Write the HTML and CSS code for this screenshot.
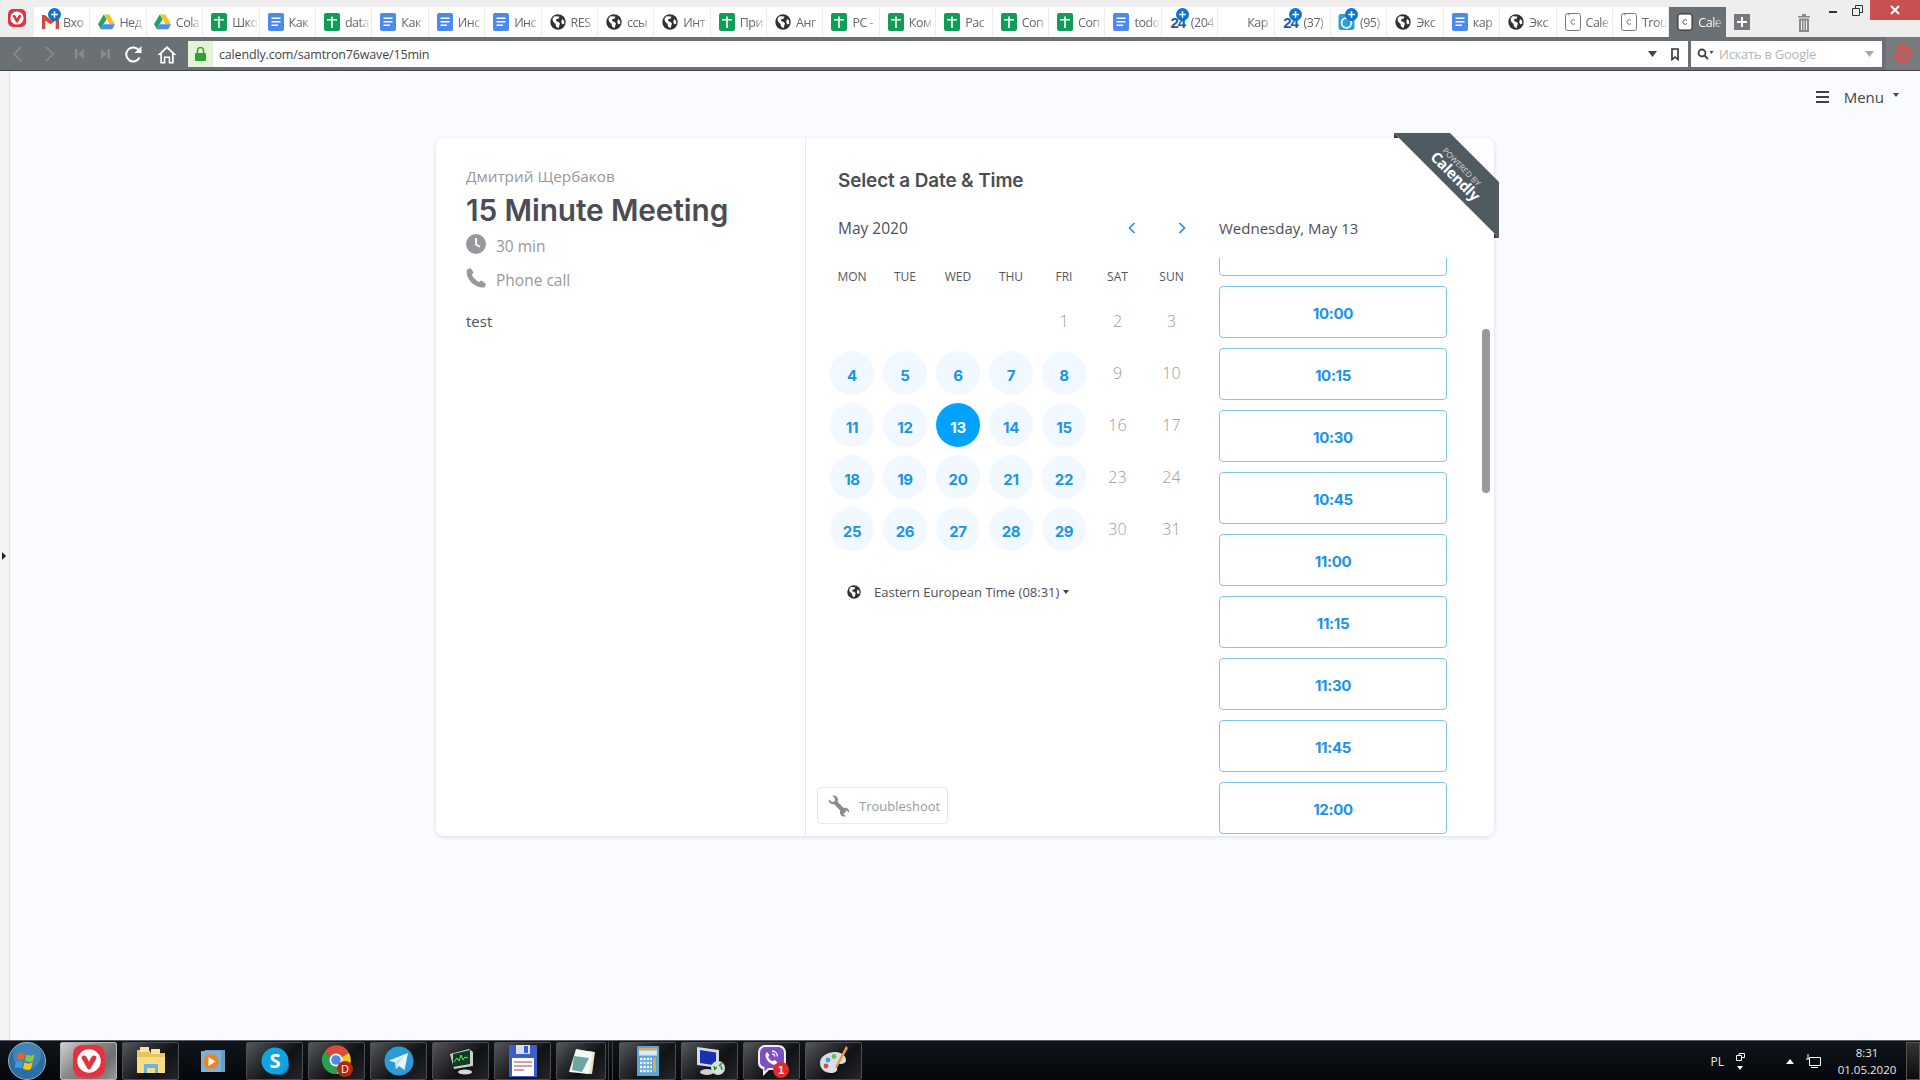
FILE: index.html
```html
<!DOCTYPE html>
<html lang="en">
<head>
<meta charset="utf-8">
<title>Calendly</title>
<link rel="stylesheet" href="styles.css">
</head>
<body>
<svg class="defs" width="0" height="0">
  <symbol id="viv" viewBox="0 0 18 18"><rect width="18" height="18" rx="5" fill="#e5323f"/><circle cx="9" cy="9" r="6.6" fill="#fff"/><path d="M5.2 6.3c1-.8 2-.3 2.4.5L9 9.4l1.4-2.7c.4-.8 1.500-1.200 2.300-.5.700.600.500 1.300.200 1.900l-2.900 5c-.5.900-1.500.900-2 0L5 7.800c-.3-.5-.3-1.100.2-1.500z" fill="#e5323f"/></symbol>
  <symbol id="sheet" viewBox="0 0 16 18"><rect width="16" height="18" rx="2" fill="#129c5a"/><path d="M3 6h4.200V3.500h1.600V6H13v1.500H8.800V15H7.200V7.500H3z" fill="#fff"/></symbol>
  <symbol id="doc" viewBox="0 0 16 18"><rect width="16" height="18" rx="2" fill="#4a8af0"/><path d="M3.500 4.500h9V6h-9zM3.500 8h9v1.500h-9zM3.500 11.500h6.500V13h-6.500z" fill="#fff"/></symbol>
  <symbol id="globe" viewBox="0 0 16 16"><circle cx="8" cy="8" r="7.700" fill="#2f3133"/><path d="M4 2.500C6 2 8 2 9.500 2.800L8.500 4.800 6.500 5 6 7l2.500 1 1.500 1.500L8.500 14c-2-.5-3-2.500-3-4L3 7.500 2.500 5zM12 5l2 1.500.3 3-1.800 1-1.300-2.200z" fill="#fff"/></symbol>
  <symbol id="drive" viewBox="0 0 18 16"><path d="M6 0h6l6 10.500h-6z" fill="#f5c02c"/><path d="M6 0l3 5.200-6 10.500L0 10.500z" fill="#1fa463"/><path d="M6 10.500h12L15 15.700H3z" fill="#4a8af0"/></symbol>
  <symbol id="gmail" viewBox="0 0 18 15"><path d="M0 0h3l6 5 6-5h3v15h-3.500V6L9 10 3.500 6v9H0z" fill="#d6493a"/></symbol>
  <symbol id="cal" viewBox="0 0 16 18"><rect x=".5" y=".5" width="15" height="17" rx="2" fill="#fff" stroke="#777"/><path d="M10 7.500a2.300 2.300 0 1 0 0 3" fill="none" stroke="#777"/><path d="M4 .5v2" stroke="#777"/></symbol>
  <symbol id="caldark" viewBox="0 0 16 18"><rect x="1" y="1" width="14" height="16" rx="2" fill="#fff" stroke="#222"/><path d="M10 7.500a2.300 2.300 0 1 0 0 3" fill="none" stroke="#555"/></symbol>
  <symbol id="clock24" viewBox="0 0 18 18"><rect width="18" height="18" rx="3" fill="#2a9fd8"/><circle cx="9" cy="10" r="5.500" fill="none" stroke="#fff" stroke-width="2"/></symbol>
  <symbol id="plus" viewBox="0 0 12 12"><circle cx="6" cy="6" r="6" fill="#0b76d1"/><path d="M5.300 3h1.400v2.300H9v1.400H6.700V9H5.300V6.700H3V5.300h2.300z" fill="#fff"/></symbol>
</svg>

<div class="app">
  <header class="topbar">
    <svg class="vlogo"><use href="#viv"/></svg>
    <nav class="tabs">
      <div class="tab"><span class="ico"><svg class="i-wide"><use href="#gmail"/></svg><svg class="badge"><use href="#plus"/></svg></span><span class="tt">Вхо</span></div>
      <div class="tab"><span class="ico"><svg class="i-wide"><use href="#drive"/></svg></span><span class="tt">Нед</span></div>
      <div class="tab"><span class="ico"><svg class="i-wide"><use href="#drive"/></svg></span><span class="tt">Cola</span></div>
      <div class="tab"><span class="ico"><svg class="i-doc"><use href="#sheet"/></svg></span><span class="tt">Шко</span></div>
      <div class="tab"><span class="ico"><svg class="i-doc"><use href="#doc"/></svg></span><span class="tt">Как</span></div>
      <div class="tab"><span class="ico"><svg class="i-doc"><use href="#sheet"/></svg></span><span class="tt">data</span></div>
      <div class="tab"><span class="ico"><svg class="i-doc"><use href="#doc"/></svg></span><span class="tt">Как</span></div>
      <div class="tab"><span class="ico"><svg class="i-doc"><use href="#doc"/></svg></span><span class="tt">Инс</span></div>
      <div class="tab"><span class="ico"><svg class="i-doc"><use href="#doc"/></svg></span><span class="tt">Инс</span></div>
      <div class="tab"><span class="ico"><svg class="i-round"><use href="#globe"/></svg></span><span class="tt">RES</span></div>
      <div class="tab"><span class="ico"><svg class="i-round"><use href="#globe"/></svg></span><span class="tt">ссы</span></div>
      <div class="tab"><span class="ico"><svg class="i-round"><use href="#globe"/></svg></span><span class="tt">Инт</span></div>
      <div class="tab"><span class="ico"><svg class="i-doc"><use href="#sheet"/></svg></span><span class="tt">При</span></div>
      <div class="tab"><span class="ico"><svg class="i-round"><use href="#globe"/></svg></span><span class="tt">Анг</span></div>
      <div class="tab"><span class="ico"><svg class="i-doc"><use href="#sheet"/></svg></span><span class="tt">PC -</span></div>
      <div class="tab"><span class="ico"><svg class="i-doc"><use href="#sheet"/></svg></span><span class="tt">Ком</span></div>
      <div class="tab"><span class="ico"><svg class="i-doc"><use href="#sheet"/></svg></span><span class="tt">Рас</span></div>
      <div class="tab"><span class="ico"><svg class="i-doc"><use href="#sheet"/></svg></span><span class="tt">Соп</span></div>
      <div class="tab"><span class="ico"><svg class="i-doc"><use href="#sheet"/></svg></span><span class="tt">Соп</span></div>
      <div class="tab"><span class="ico"><svg class="i-doc"><use href="#doc"/></svg></span><span class="tt">todo</span></div>
      <div class="tab"><span class="ico"><b class="num">24</b><svg class="badge"><use href="#plus"/></svg></span><span class="tt">(204</span></div>
      <div class="tab"><span class="ico"></span><span class="tt">Кар</span></div>
      <div class="tab"><span class="ico"><b class="num">24</b><svg class="badge"><use href="#plus"/></svg></span><span class="tt">(37)</span></div>
      <div class="tab"><span class="ico"><svg class="i-wide"><use href="#clock24"/></svg><svg class="badge"><use href="#plus"/></svg></span><span class="tt">(95)</span></div>
      <div class="tab"><span class="ico"><svg class="i-round"><use href="#globe"/></svg></span><span class="tt">Экс</span></div>
      <div class="tab"><span class="ico"><svg class="i-doc"><use href="#doc"/></svg></span><span class="tt">кар</span></div>
      <div class="tab"><span class="ico"><svg class="i-round"><use href="#globe"/></svg></span><span class="tt">Экс</span></div>
      <div class="tab"><span class="ico"><svg class="i-doc"><use href="#cal"/></svg></span><span class="tt">Cale</span></div>
      <div class="tab"><span class="ico"><svg class="i-doc"><use href="#cal"/></svg></span><span class="tt">Trou</span></div>
      <div class="tab tab-active"><span class="ico"><svg class="i-doc"><use href="#caldark"/></svg></span><span class="tt">Cale</span></div>
    </nav>
    <div class="addtab"><svg width="16" height="16" viewBox="0 0 16 16"><rect width="16" height="16" fill="#75797d"/><path d="M7 3h2v4h4v2H9v4H7V9H3V7h4z" fill="#fff"/></svg></div>
    <svg class="trash" width="12" height="18" viewBox="0 0 12 18"><path d="M4 0h4v2h4v1.500H0V2h4zM1 4.500h10V18H1zM3 6.500v9.500h1V6.500zM5.500 6.500v9.500h1V6.500zM8 6.500v9.500h1V6.500z" fill="#8a8a8a" fill-rule="evenodd"/></svg>
    <div class="winctl">
      <span class="wc wc-min"><svg width="8" height="3"><rect width="8" height="2" fill="#333"/></svg></span>
      <span class="wc wc-max"><svg width="11" height="11" viewBox="0 0 11 11"><path d="M.5 3.500h7v7h-7zM3.500 3.500v-3h7v7h-3" fill="none" stroke="#333"/></svg></span>
      <span class="wc-close"><svg width="10" height="10" viewBox="0 0 10 10"><path d="M1 1l8 8M9 1l-8 8" stroke="#fff" stroke-width="2"/></svg></span>
    </div>
  </header>

  <div class="toolbar">
    <span class="tb w34"><svg width="10" height="16" viewBox="0 0 10 16"><path d="M9 1L2 8l7 7" fill="none" stroke="#8a8e93" stroke-width="1.500"/></svg></span>
    <span class="tb w32"><svg width="10" height="16" viewBox="0 0 10 16"><path d="M1 1l7 7-7 7" fill="none" stroke="#8a8e93" stroke-width="1.500"/></svg></span>
    <span class="tb w27"><svg width="10" height="10" viewBox="0 0 10 10"><path d="M0 0h2.500v10H0zM9 0v10L3 5z" fill="#888c91"/></svg></span>
    <span class="tb w23"><svg width="10" height="10" viewBox="0 0 10 10"><path d="M1 0v10l6-5zM7.500 0H10v10H7.500z" fill="#888c91"/></svg></span>
    <span class="tb w34"><svg width="19" height="19" viewBox="0 0 19 19"><path d="M15.500 12.500a7 7 0 1 1-.5-7" fill="none" stroke="#fff" stroke-width="2"/><path d="M17.500 1v7h-7z" fill="#fff"/></svg></span>
    <span class="tb w34"><svg width="20" height="19" viewBox="0 0 20 19"><path d="M10 1L0.500 10h2.800v8.500h5V13h3.400v5.500h5V10h2.800z" fill="#fff"/><path d="M10 3.500L5 8.300v8.700h1.800v-5.500h6.400V17H15V8.300z" fill="#6b7075"/></svg></span>
    <div class="addr">
      <span class="lock"><svg width="11" height="14" viewBox="0 0 11 14"><path d="M2.500 6V3.500a3 3 0 0 1 6 0V6" fill="none" stroke="#2da52d" stroke-width="1.500"/><rect y="6" width="11" height="8" rx="1" fill="#2da52d"/></svg></span>
      <span class="url">calendly.com/samtron76wave/15min</span>
      <svg class="addr-tri" width="9" height="6" viewBox="0 0 9 6"><path d="M0 0h9L4.500 6z" fill="#444"/></svg>
      <svg class="addr-bm" width="8" height="13" viewBox="0 0 8 13"><path d="M1 1h6v10.500L4 9 1 11.500z" fill="none" stroke="#333" stroke-width="1.600"/></svg>
    </div>
    <div class="search">
      <svg width="17" height="12" viewBox="0 0 17 12"><circle cx="5" cy="5" r="3.500" fill="none" stroke="#444" stroke-width="1.800"/><path d="M7.500 7.500L11 11" stroke="#444" stroke-width="2"/><path d="M12.500 3h4l-2 3z" fill="#444"/></svg>
      <span class="ph">Искать в Google</span>
      <svg class="s-tri" width="9" height="6" viewBox="0 0 9 6"><path d="M0 0h9L4.500 6z" fill="#aaa"/></svg>
    </div>
    <div class="rlogo"><svg width="20" height="22" viewBox="0 0 20 22"><g fill="none" stroke="#e0504c" stroke-width="1.700"><path d="M10 1.500L18.500 8 14 19 5 14z"/><path d="M10 20.500L1.500 14 6 3l9 5z"/><circle cx="10" cy="11" r="3.500"/></g></svg></div>
  </div>

  <div class="page">
    <aside class="strip"><span class="strip-arrow"></span></aside>
    <main class="content">
      <div class="menubar">
        <span class="burger"><i></i><i></i><i></i></span>
        <span class="menu-t">Menu</span>
        <span class="menu-c"></span>
      </div>
      <section class="card">
        <div class="info">
          <div class="owner">Дмитрий Щербаков</div>
          <h1 class="title">15 Minute Meeting</h1>
          <div class="meta"><svg width="20" height="20" viewBox="0 0 20 20"><circle cx="10" cy="10" r="10" fill="#97979c"/><path d="M10 4v6.500l4 2.200" fill="none" stroke="#fff" stroke-width="1.800"/></svg><span>30 min</span></div>
          <div class="meta meta-2"><svg width="20" height="20" viewBox="0 0 20 20"><path d="M4.500 0L1 1.500C0 6 2 11 5.500 14.500S14 20 18.500 19.500L20 16l-4.500-3.500-2.500 1.500C10 12.500 7.500 10 6 7l1.500-2.500z" fill="#97979c"/></svg><span>Phone call</span></div>
          <p class="desc">test</p>
        </div>
        <div class="sched">
          <h2 class="sel">Select a Date &amp; Time</h2>
          <div class="cols">
            <div class="calc">
              <div class="monthrow">
                <span class="month">May 2020</span>
                <span class="nav"><svg width="8" height="12" viewBox="0 0 8 12"><path d="M6.500 1L1.500 6l5 5" fill="none" stroke="#1a8fe3" stroke-width="1.600"/></svg></span>
                <span class="nav"><svg width="8" height="12" viewBox="0 0 8 12"><path d="M1.500 1l5 5-5 5" fill="none" stroke="#1a8fe3" stroke-width="1.600"/></svg></span>
              </div>
              <div class="dow"><span>MON</span><span>TUE</span><span>WED</span><span>THU</span><span>FRI</span><span>SAT</span><span>SUN</span></div>
              <div class="days">
                <span class="d"></span><span class="d"></span><span class="d"></span><span class="d"></span>
                <span class="d off">1</span><span class="d off">2</span><span class="d off">3</span>
                <span class="d"><b>4</b></span><span class="d"><b>5</b></span><span class="d"><b>6</b></span><span class="d"><b>7</b></span><span class="d"><b>8</b></span><span class="d off">9</span><span class="d off">10</span>
                <span class="d"><b>11</b></span><span class="d"><b>12</b></span><span class="d"><b class="cur">13</b></span><span class="d"><b>14</b></span><span class="d"><b>15</b></span><span class="d off">16</span><span class="d off">17</span>
                <span class="d"><b>18</b></span><span class="d"><b>19</b></span><span class="d"><b>20</b></span><span class="d"><b>21</b></span><span class="d"><b>22</b></span><span class="d off">23</span><span class="d off">24</span>
                <span class="d"><b>25</b></span><span class="d"><b>26</b></span><span class="d"><b>27</b></span><span class="d"><b>28</b></span><span class="d"><b>29</b></span><span class="d off">30</span><span class="d off">31</span>
              </div>
              <div class="tz">
                <svg width="14" height="14" viewBox="0 0 16 16"><use href="#globe"/></svg>
                <span>Eastern European Time (08:31)</span><i class="tz-c"></i>
              </div>
              <button class="trouble" type="button">
                <svg width="22" height="22" viewBox="0 0 22 22"><path d="M6.500 6.500L17 17.500" stroke="#8b8b8f" stroke-width="4.200" fill="none"/><path d="M1 4.200L3.700 7l2.800-.6.600-2.800L4.300.8C7-.4 10 1.500 10 4.500c0 2.800-2.800 5-5.500 4.700C2 8.900.2 6.800 1 4.200z" fill="#8b8b8f"/><path d="M21 17.800L18.300 15l-2.800.6-.6 2.800 2.800 2.800c-2.700 1.200-5.700-.7-5.700-3.700 0-2.800 2.800-5 5.500-4.700 2.500.3 4.300 2.400 3.500 5z" fill="#8b8b8f"/></svg>
                <span>Troubleshoot</span>
              </button>
            </div>
            <div class="timesc">
              <div class="datelabel">Wednesday, May 13</div>
              <div class="window">
                <div class="slots">
                  <div class="slot"></div>
                  <div class="slot">10:00</div>
                  <div class="slot">10:15</div>
                  <div class="slot">10:30</div>
                  <div class="slot">10:45</div>
                  <div class="slot">11:00</div>
                  <div class="slot">11:15</div>
                  <div class="slot">11:30</div>
                  <div class="slot">11:45</div>
                  <div class="slot">12:00</div>
                </div>
              </div>
            </div>
          </div>
        </div>
        <span class="scroll"></span>
        <div class="ribbon">
          <svg width="105" height="105" viewBox="0 0 105 105"><path d="M0 0h56l49 49v56z" fill="#505a61"/><path d="M0 0v5h5zM100 100v5h5z" fill="#373d42"/></svg>
          <span class="rb-small">POWERED BY</span>
          <span class="rb-big">Calendly</span>
        </div>
      </section>
    </main>
  </div>

  <footer class="taskbar">
    <div class="orb"><svg width="38" height="38" viewBox="0 0 38 38"><circle cx="19" cy="19" r="18.500" fill="#2b6ea3" stroke="#8fb6cf"/><circle cx="19" cy="13" r="14" fill="#6fb0d8" opacity=".35"/><path d="M10 12c3-1.500 5-1 7 0l-1.500 6.500c-2-1-4-1.500-7-.5z" fill="#e8632c"/><path d="M18.500 12.500c2.500 1.500 5 1.500 8 0L25 19c-3 1.500-5.500 1-8-.5z" fill="#8dc63f"/><path d="M8 19.500c3-1 5-.5 7 .5l-1.500 6.500c-2-1-4-1.500-7-.5z" fill="#3d9be0"/><path d="M16.500 20.500c2.500 1.500 5 1.500 8 0L23 27c-3 1.500-5.500 1-8-.5z" fill="#fcc419"/></svg></div>
    <div class="tbtn tbtn-on"><svg width="32" height="32" viewBox="0 0 18 18"><use href="#viv"/></svg></div>
    <div class="tbtn"><svg width="32" height="32" viewBox="0 0 32 32"><path d="M2 5h12l2 3h14v20H2z" fill="#e8c558"/><path d="M5 2h9v5H5zM16 4h9v5h-9z" fill="#f5e6a8"/><path d="M2 12h28v16H2z" fill="#f7dc86"/><path d="M9 28v-9h14v9h-3v-5h-8v5z" fill="#6db3dc"/></svg></div>
    <div class="tbtn tbtn-flat"><svg width="28" height="28" viewBox="0 0 28 28"><path d="M6 3h20v22H6z" fill="#6a9cc4"/><path d="M2 4h20v21H2z" fill="#7cb1d8"/><circle cx="12" cy="14.500" r="7.500" fill="#e98622"/><path d="M9.500 10l7 4.500-7 4.500z" fill="#fff"/></svg></div>
    <div class="tbtn"><svg width="32" height="32" viewBox="0 0 32 32"><circle cx="14" cy="14" r="9" fill="#0a8bc9"/><circle cx="21" cy="21" r="9" fill="#0a8bc9"/><circle cx="16" cy="16" r="13.500" fill="#12a3e2"/><text x="16" y="23" class="skype">S</text></svg></div>
    <div class="tbtn"><svg width="34" height="34" viewBox="0 0 34 34"><path d="M16 16L4.500 8A14 14 0 0 1 29 9z" fill="#dd4b3a"/><path d="M16 16L29 9A14 14 0 0 1 17 30z" fill="#f5c42c"/><path d="M16 16L17 30A14 14 0 0 1 4.500 8z" fill="#2aa04f"/><circle cx="16" cy="16" r="6.500" fill="#fff"/><circle cx="16" cy="16" r="4.800" fill="#4a8af0"/><circle cx="25" cy="25" r="8" fill="#b3260f"/><text x="25" y="29" class="chr-d">D</text></svg></div>
    <div class="tbtn"><svg width="30" height="30" viewBox="0 0 30 30"><circle cx="15" cy="15" r="14.500" fill="#2a9dd8"/><path d="M5 14.500L24 7l-3.500 17-5.500-4-3 3-1-6.500z" fill="#e8f4fb"/><path d="M11 16.500l9-6.500-6.500 8-.5 4z" fill="#b8d9ea"/></svg></div>
    <div class="tbtn"><svg width="30" height="30" viewBox="0 0 30 30"><path d="M4 8l19-5 4 3v14l-19 3z" fill="#c7d0c9"/><path d="M7 8l17-4v14L7 21z" fill="#0f3d1e"/><path d="M8 16l3-4 2 3 2-6 2 5 2-3 3 1" fill="none" stroke="#6ae06a"/><ellipse cx="19" cy="26" rx="7" ry="2.500" fill="#d8d8d8"/></svg></div>
    <div class="tbtn"><svg width="32" height="34" viewBox="0 0 32 34"><path d="M2 1h28v32H2z" fill="#3a5fc8"/><path d="M9 1h14v9H9z" fill="#d9dee8"/><path d="M17 2h4v7h-4z" fill="#3a5fc8"/><path d="M5 14h22v18H5z" fill="#fff"/><path d="M7 18h18M7 22h18M7 26h10" stroke="#b33a3a"/></svg></div>
    <div class="tbtn tbtn-sm"><svg width="32" height="30" viewBox="0 0 32 30"><path d="M12 4l18 2-3 22-10-1z" fill="#e8e4c0"/><path d="M11 3l17 3-4 22L4 26z" fill="#f4f6f6"/><path d="M9 10l15 2-7 14-10-2z" fill="#6aa7a0"/></svg></div>
    <span class="tsep"></span>
    <div class="tbtn"><svg width="22" height="30" viewBox="0 0 22 30"><rect width="22" height="30" rx="1" fill="#5aa5d8"/><rect x="2" y="2" width="18" height="2.500" fill="#e3a94f"/><rect x="2" y="4.500" width="18" height="5" fill="#d8eaf5"/><path d="M3 13h12M3 17h12M3 21h12M3 25h12" stroke="#f2f7fb" stroke-width="2.400" stroke-dasharray="2.400 1"/><path d="M17.500 12v14" stroke="#e3a94f" stroke-width="3"/></svg></div>
    <div class="tbtn"><svg width="34" height="32" viewBox="0 0 34 32"><path d="M4 2l22 3v18L4 20z" fill="#d6dae0"/><path d="M7 5l16 2.500v13L7 18z" fill="#1b2fb5"/><ellipse cx="14" cy="27" rx="7" ry="3" fill="#cfcfcf"/><circle cx="25" cy="23" r="7" fill="#d6e4d8"/><path d="M21 25l3-3M26 21l3-3M21 21l1 4M28 21l1 4" stroke="#2c8a3d" stroke-width="1.500"/></svg></div>
    <div class="tbtn tbtn-vib"><svg width="30" height="32" viewBox="0 0 30 32"><path d="M8 0h13c5 0 8 3.500 8 8v9c0 5-3 8-8 8H12l-6 6v-6.500C2 23 1 20 1 17V8c0-4.500 3-8 7-8z" fill="#f2ecfa"/><path d="M8.500 2h12c4 0 6.500 2.500 6.500 6v9c0 4-2.500 6-6.500 6H11l-3.500 3.500V22C4.500 21 3 19.500 3 17V8c0-3.500 2.500-6 5.500-6z" fill="#7b51c0"/><path d="M10 7l2.500 3-1.300 2c.8 2 2.300 3.500 4.300 4.300l2-1.300 3 2.500-1.500 2.500C13 20 8 14 8.500 9z" fill="#fff"/><path d="M15 6c3 0 5.500 2.500 5.500 5.500M15 8.800c1.500 0 2.700 1.200 2.700 2.700" fill="none" stroke="#fff" stroke-width="1.300"/></svg><span class="vib-b">1</span></div>
    <div class="tbtn"><svg width="32" height="32" viewBox="0 0 32 32"><path d="M2 18c0-7 8-11 15-11 7 0 11 4 11 8 0 3-3 4-6 4-3 0-4 1-3 4 1 3-2 5-6 5-6 0-11-4-11-10z" fill="#d8dfe8"/><circle cx="10" cy="15" r="2.400" fill="#3aa0d8"/><circle cx="16" cy="11.500" r="2.400" fill="#6cbe45"/><circle cx="8" cy="21" r="2.400" fill="#d94a3a"/><path d="M28 1l2 2-11 20-2-1z" fill="#e89a3a"/></svg></div>
    <div class="tray">
      <span class="lang">PL</span>
      <span class="tray-ic"><svg width="9" height="8" viewBox="0 0 9 8"><path d="M.5 2.500h5v5h-5zM3 2.500V.5h5.500v4H5.500" fill="none" stroke="#fff"/></svg><svg width="6" height="4" viewBox="0 0 6 4"><path d="M0 0h6L3 4z" fill="#fff"/></svg></span>
      <svg class="tray-up" width="8" height="5" viewBox="0 0 8 5"><path d="M0 5h8L4 0z" fill="#fff"/></svg>
      <svg class="tray-net" width="15" height="14" viewBox="0 0 15 14"><path d="M3.500 3.500h11v8h-11zM5 13.500h7M2 0v5M0 5h4" fill="none" stroke="#fff"/></svg>
      <div class="clock"><span>8:31</span><span>01.05.2020</span></div>
      <span class="showdesk"></span>
    </div>
  </footer>
</div>
</body>
</html>
```

FILE: styles.css
```css
* { box-sizing: border-box; }
html, body { margin: 0; padding: 0; height: 100%; overflow: hidden; }
body { font-family: "Open Sans", "Noto Sans", sans-serif; background: #fff; }
.defs { position: absolute; }
.app { display: flex; flex-direction: column; width: 1920px; height: 1080px; }

/* Browser tab strip */
.topbar { display: flex; height: 37px; background: #eeeeee; padding-left: 8px; align-items: flex-start; flex: none; }
.vlogo { width: 18px; height: 18px; margin: 9px 8px 0 0; flex: none; }
.tabs { display: flex; margin-top: 7px; height: 30px; flex: none; }
.tab { width: 56.4px; height: 30px; background: #fff; border-right: 1px solid #ececec; display: flex; align-items: center; overflow: hidden; flex: none; }
.ico { position: relative; width: 29px; height: 20px; display: flex; align-items: center; justify-content: center; flex: none; padding-left: 3px; }
.i-wide { width: 17px; height: 16px; }
.i-doc { width: 16px; height: 18px; }
.i-round { width: 16px; height: 16px; }
.badge { position: absolute; width: 13px; height: 13px; left: 14px; top: -4px; }
.num { color: #1d5a9e; font: 700 15px "Liberation Sans", sans-serif; letter-spacing: -1px; }
.tt { font-size: 12.500px; color: #666; letter-spacing: -.5px; white-space: nowrap; width: 27px; overflow: hidden; -webkit-mask-image: linear-gradient(90deg, #000 55%, transparent 100%); mask-image: linear-gradient(90deg, #000 55%, transparent 100%); }
.tab-active { background: #6b7075; border-right: 0; }
.tab-active .tt { color: #fff; }
.addtab { margin: 14px 0 0 8px; height: 16px; flex: none; display: flex; }
.trash { margin: 14px 0 0 48px; flex: none; }
.winctl { display: flex; align-items: flex-start; margin-left: auto; height: 20px; }
.wc { display: flex; align-items: center; justify-content: center; height: 20px; width: 25px; }
.wc-min svg { margin-top: 4px; }
.wc-max svg { margin-top: 0; }
.wc-close { width: 50px; height: 20px; background: #c75050; display: flex; align-items: center; justify-content: center; margin-left: 0; }

/* Address toolbar */
.toolbar { display: flex; height: 34px; background: #6b7075; border-bottom: 1px solid #3f4347; padding-top: 4px; flex: none; }
.tb { display: flex; align-items: center; justify-content: center; height: 26px; flex: none; }
.w34 { width: 34px; }
.w32 { width: 32px; }
.w27 { width: 27px; }
.w23 { width: 23px; }
.addr { margin-left: 4px; width: 1500px; height: 26px; background: #fff; display: flex; align-items: center; flex: none; }
.lock { width: 25px; height: 26px; background: #e2f3da; display: flex; align-items: center; justify-content: center; }
.url { margin-left: 6px; font-size: 12.500px; color: #444; letter-spacing: -.16px; }
.addr-tri { margin-left: auto; }
.addr-bm { margin: 0 9px 0 14px; }
.search { margin-left: 3px; width: 191px; height: 26px; background: #fff; display: flex; align-items: center; padding-left: 6px; flex: none; }
.ph { margin-left: 5px; font-size: 13px; color: #b5b5b5; letter-spacing: -.25px; }
.s-tri { margin-left: auto; margin-right: 8px; }
.rlogo { margin: -4px 0 0 4px; width: 34px; height: 33px; background: #777b80; display: flex; align-items: center; justify-content: center; }

/* Page */
.page { flex: 1; display: flex; min-height: 0; background: #fafbfe; }
.strip { width: 10px; background: #f3f3f3; border-right: 1px solid #e4e4e4; display: flex; align-items: center; flex: none; }
.strip-arrow { width: 0; height: 0; border-left: 4px solid #222; border-top: 4px solid transparent; border-bottom: 4px solid transparent; margin: 0 0 0 2px; }
.content { flex: 1; min-width: 0; }
.menubar { display: flex; justify-content: flex-end; align-items: center; height: 52px; padding-right: 21px; }
.burger { display: flex; flex-direction: column; gap: 3px; width: 13px; }
.burger i { display: block; height: 2px; background: #3c3f44; }
.menu-t { margin-left: 15px; font-size: 15px; color: #444; }
.menu-c { margin-left: 9px; margin-top: -4px; border: 3px solid transparent; border-top: 4px solid #444; border-bottom: 0; }

.card { position: relative; margin: 15px 0 0 426px; width: 1058px; height: 698px; background: #fff; border-radius: 8px; box-shadow: 0 1px 5px rgba(0,0,0,.13); display: flex; }
.info { width: 370px; border-right: 1px solid #e8e8e8; padding: 28px 30px 0; flex: none; color: #97979c; }
.owner { font-size: 15.300px; line-height: 20px; }
.title { margin: 4px 0 0; font: 600 29.800px/40px "Inter", sans-serif; color: #4a4d53; letter-spacing: -.1px; }
.meta { display: flex; align-items: flex-start; height: 20px; margin-top: 4px; font-size: 15.500px; line-height: 20px; }
.meta span { margin: 2px 0 0 10px; }
.meta-2 { margin-top: 14px; }
.desc { margin: 23px 0 0; font-size: 15px; line-height: 20px; color: #4d5055; }

.sched { flex: 1; min-width: 0; display: flex; flex-direction: column; }
.sel { margin: 31px 0 0 32px; font: 600 18.900px/24px "Inter", sans-serif; color: #4a4d53; letter-spacing: -.1px; }
.cols { display: flex; flex: 1; margin-top: 23px; min-height: 0; }
.calc { width: 413px; padding-left: 19.500px; display: flex; flex-direction: column; flex: none; }
.monthrow { display: flex; width: 371px; height: 24px; align-items: center; padding: 0 4.500px 0 12.500px; gap: 30px; }
.month { flex: 1; font-size: 15.500px; color: #4d5055; }
.nav { width: 20px; display: flex; justify-content: center; }
.dow { display: grid; grid-template-columns: repeat(5, 53px) repeat(2, 54px); margin-top: 27px; height: 20px; font-size: 12px; line-height: 20px; text-align: center; color: #54575c; }
.days { display: grid; grid-template-columns: repeat(5, 53px) repeat(2, 54px); grid-auto-rows: 52px; margin-top: 8px; }
.d { display: flex; align-items: center; justify-content: center; font-size: 16px; }
.off { color: #9b9ba0; font-weight: 300; }
.d b { width: 44px; height: 44px; border-radius: 50%; background: #f1f8ff; color: #1a94e8; font: 700 15px/44px "Inter", sans-serif; padding-top: 3px; text-align: center; letter-spacing: -.3px; }
.d b.cur { background: #00a2ff; color: #fff; }
.tz { display: flex; align-items: center; margin-top: 27px; height: 20px; padding-left: 21.500px; font-size: 13px; color: #4d5055; }
.tz span { margin-left: 13px; }
.tz-c { margin-left: 4px; border: 3.500px solid transparent; border-top: 4px solid #444; border-bottom: 0; }
.trouble { margin: auto 0 12px -8.500px; width: 131px; height: 37px; background: #fff; border: 1px solid #e7e7e7; border-radius: 4px; display: flex; align-items: center; padding: 0 0 0 10px; font: 13px "Open Sans", sans-serif; color: #99999e; }
.trouble span { margin-left: 9px; }
.timesc { width: 228px; flex: none; }
.datelabel { height: 24px; font-size: 15px; line-height: 24px; color: #4d5055; }
.window { margin-top: 18px; height: 578px; overflow: hidden; }
.slots { display: flex; flex-direction: column; gap: 10px; margin-top: -34px; }
.slot { height: 52px; border: 1px solid #80c6ea; border-radius: 4px; flex: none; display: flex; align-items: center; justify-content: center; padding-top: 3px; font: 700 15px "Inter", sans-serif; letter-spacing: -.3px; color: #1a94e8; }
.scroll { position: absolute; left: 1046px; top: 191px; width: 8px; height: 164px; background: #999; border-radius: 4px; }
.ribbon { position: absolute; left: 958px; top: -5px; width: 105px; height: 105px; }
.ribbon svg { display: block; }
.rb-small { position: absolute; left: 38px; top: 28px; width: 60px; text-align: center; font-size: 8px; color: #d6d8da; transform: rotate(45deg); letter-spacing: 0; }
.rb-big { position: absolute; left: 31px; top: 32px; width: 60px; text-align: center; font-size: 15px; font-weight: 700; color: #fff; transform: rotate(45deg); letter-spacing: -.3px; }

/* Windows taskbar */
.taskbar { height: 40px; flex: none; display: flex; align-items: stretch; background: linear-gradient(#10151b, #05080c); border-top: 1px solid #5b6068; gap: 5px; padding: 1px 0 0 8px; }
.orb { width: 38px; height: 38px; margin-right: 9px; flex: none; }
.tbtn { width: 57px; flex: none; display: flex; align-items: center; justify-content: center; border: 1px solid #4a4d52; border-radius: 2px; background: linear-gradient(135deg, #55585c 0%, #2a2c2f 35%, #101214 60%, #23252a 100%); position: relative; }
.tbtn-on { background: linear-gradient(135deg, #d0d0d0 0%, #8c8c8c 40%, #6e6e6e 70%, #9a9a9a 100%); border-color: #b5b5b5; }
.tbtn-flat { background: none; border-color: transparent; }
.tbtn-sm { width: 50px; }
.tsep { width: 5px; margin: 0 0 0 -3px; border-left: 1px solid #3e4146; border-right: 1px solid #3e4146; flex: none; }
.tsep + .tbtn { margin-left: 1px; }
.skype { font: 700 20px "Open Sans", sans-serif; fill: #fff; text-anchor: middle; }
.chr-d { font: 11px "Open Sans", sans-serif; fill: #fff; text-anchor: middle; }
.vib-b { position: absolute; left: 29px; top: 19px; width: 16px; height: 16px; border-radius: 50%; background: #e22a2a; color: #fff; font: 700 11px/16px "Liberation Sans", sans-serif; text-align: center; }
.tray { margin-left: auto; display: flex; align-items: center; color: #eaeaea; font-size: 12px; }
.lang { font-size: 12px; margin-right: 10px; }
.tray-ic { display: flex; flex-direction: column; align-items: center; gap: 5px; width: 12px; margin-right: 39.500px; }
.tray-up { margin-right: 12.500px; }
.tray-net { margin-right: 16px; }
.clock { display: flex; flex-direction: column; align-items: center; width: 60px; line-height: 17px; font-size: 11.500px; }
.showdesk { margin-left: 9px; width: 14px; height: 38px; border: 1px solid #555; background: linear-gradient(#333, #0c0c0c); }
```
